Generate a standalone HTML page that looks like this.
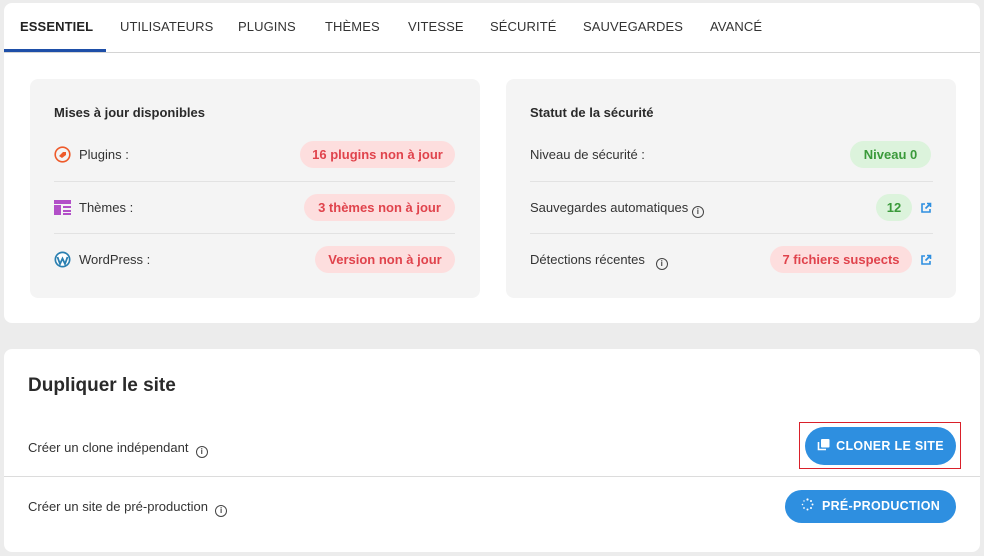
<!DOCTYPE html>
<html><head><meta charset="utf-8"><style>
*{box-sizing:border-box;margin:0;padding:0}
body{width:984px;height:556px;background:#ececec;font-family:"Liberation Sans",sans-serif;color:#333;position:relative;overflow:hidden}
.a{position:absolute}
.card{background:#fff;border-radius:8px}
.tab{position:absolute;top:19px;font-size:13px;color:#333;letter-spacing:.1px}
.panel{background:#f4f4f4;border-radius:8px}
.ttl{font-size:13px;font-weight:bold;color:#2a2a2a}
.lbl{font-size:13px;color:#333}
.b{position:absolute;height:27px;border-radius:14px;font-size:13px;font-weight:bold;line-height:27px;text-align:center}
.r{background:#fddede;color:#e0434c}
.g{background:#dcf3dc;color:#3a9a3a}
.hr{position:absolute;height:1px;background:#e2e2e2}
.info{display:inline-block;width:12px;height:12px;border:1.3px solid #444;border-radius:50%;font-size:8px;line-height:10px;text-align:center;font-weight:bold;vertical-align:-2px;color:#444}
.btn{position:absolute;background:#2e8fe0;color:#fff;font-weight:bold;font-size:12.5px;border-radius:19px;text-align:center;letter-spacing:.3px}
</style></head><body>
<div class="a card" style="left:4px;top:3px;width:976px;height:320px"></div>
<div class="tab" style="left:20px;font-weight:bold;color:#222">ESSENTIEL</div>
<div class="tab" style="left:120px">UTILISATEURS</div>
<div class="tab" style="left:238px">PLUGINS</div>
<div class="tab" style="left:325px">THÈMES</div>
<div class="tab" style="left:408px">VITESSE</div>
<div class="tab" style="left:490px">SÉCURITÉ</div>
<div class="tab" style="left:583px">SAUVEGARDES</div>
<div class="tab" style="left:710px">AVANCÉ</div>
<div class="a" style="left:4px;top:52px;width:976px;height:1px;background:#d4d4d4"></div>
<div class="a" style="left:4px;top:49px;width:102px;height:3px;background:#1e4fa8"></div>

<div class="a panel" style="left:30px;top:79px;width:450px;height:219px"></div>
<div class="a ttl" style="left:54px;top:105px">Mises à jour disponibles</div>
<svg class="a" style="left:54px;top:146px" width="17" height="17" viewBox="0 0 17 17"><circle cx="8.5" cy="8.5" r="7.3" fill="none" stroke="#ee5a2a" stroke-width="1.6"/><path d="M5 10 L9 6 L12 6 L12 9 L8 12Z" fill="#ee5a2a"/></svg>
<div class="a lbl" style="left:79px;top:147px">Plugins :</div>
<div class="b r" style="left:300px;top:141px;width:155px">16 plugins non à jour</div>
<div class="hr" style="left:54px;top:181px;width:401px"></div>
<svg class="a" style="left:54px;top:200px" width="17" height="15" viewBox="0 0 17 15"><rect x="0" y="0" width="17" height="4" fill="#b24fc8"/><rect x="0" y="5" width="7" height="10" fill="#b24fc8"/><rect x="9" y="6" width="8" height="2" fill="#b24fc8"/><rect x="9" y="10" width="8" height="2" fill="#b24fc8"/><rect x="9" y="13" width="8" height="2" fill="#b24fc8"/></svg>
<div class="a lbl" style="left:79px;top:200px">Thèmes :</div>
<div class="b r" style="left:304px;top:194px;width:151px">3 thèmes non à jour</div>
<div class="hr" style="left:54px;top:233px;width:401px"></div>
<svg class="a" style="left:54px;top:251px" width="17" height="17" viewBox="0 0 17 17"><circle cx="8.5" cy="8.5" r="8" fill="#2a7fb0"/><circle cx="8.5" cy="8.5" r="6.3" fill="#fff"/><path d="M3.5 6 L6 13 L8.5 7.5 L11 13 L13.5 6" fill="none" stroke="#2a7fb0" stroke-width="1.8"/></svg>
<div class="a lbl" style="left:79px;top:252px">WordPress :</div>
<div class="b r" style="left:315px;top:246px;width:140px">Version non à jour</div>

<div class="a panel" style="left:506px;top:79px;width:450px;height:219px"></div>
<div class="a ttl" style="left:530px;top:105px">Statut de la sécurité</div>
<div class="a lbl" style="left:530px;top:147px">Niveau de sécurité :</div>
<div class="b g" style="left:850px;top:141px;width:81px">Niveau 0</div>
<div class="hr" style="left:530px;top:181px;width:403px"></div>
<div class="a lbl" style="left:530px;top:200px">Sauvegardes automatiques <span class="info">i</span></div>
<div class="b g" style="left:876px;top:194px;width:36px">12</div>
<svg class="a" style="left:920px;top:202px" width="12" height="12" viewBox="0 0 12 12"><path d="M5 2H2v8h8V7M7 1.5h3.5V5M10.5 1.5L5.5 6.5" fill="none" stroke="#2e8fe0" stroke-width="1.6"/></svg>
<div class="hr" style="left:530px;top:233px;width:403px"></div>
<div class="a lbl" style="left:530px;top:252px">Détections récentes &nbsp;&nbsp;<span class="info">i</span></div>
<div class="b r" style="left:770px;top:246px;width:142px">7 fichiers suspects</div>
<svg class="a" style="left:920px;top:254px" width="12" height="12" viewBox="0 0 12 12"><path d="M5 2H2v8h8V7M7 1.5h3.5V5M10.5 1.5L5.5 6.5" fill="none" stroke="#2e8fe0" stroke-width="1.6"/></svg>

<div class="a card" style="left:4px;top:349px;width:976px;height:203px"></div>
<div class="a" style="left:28px;top:375px;font-size:19px;font-weight:bold;color:#2a2a2a">Dupliquer le site</div>
<div class="a lbl" style="left:28px;top:440px">Créer un clone indépendant &nbsp;<span class="info">i</span></div>
<div class="a" style="left:4px;top:476px;width:976px;height:1px;background:#dcdcdc"></div>
<div class="a lbl" style="left:28px;top:499px">Créer un site de pré-production &nbsp;<span class="info">i</span></div>
<div class="a" style="left:799px;top:422px;width:162px;height:47px;border:1.5px solid #d9202a"></div>
<div class="btn" style="left:805px;top:427px;width:151px;height:38px;line-height:38px"><svg width="13" height="13" viewBox="0 0 13 13" style="vertical-align:-1px;margin-right:6px"><rect x="4" y="1" width="8.5" height="8.5" rx="1" fill="#fff"/><path d="M1.5 4v7.5H9" fill="none" stroke="#fff" stroke-width="1.6"/></svg>CLONER LE SITE</div>
<div class="btn" style="left:785px;top:490px;width:171px;height:33px;line-height:33px"><svg width="13" height="13" viewBox="0 0 13 13" style="vertical-align:-1px;margin-right:8px" fill="#fff"><circle cx="6.5" cy="1.5" r="1.1"/><circle cx="10" cy="3" r="1"/><circle cx="11.5" cy="6.5" r="1"/><circle cx="10" cy="10" r="1"/><circle cx="6.5" cy="11.5" r="1"/><circle cx="3" cy="10" r=".9"/><circle cx="1.5" cy="6.5" r=".8"/><circle cx="3" cy="3" r=".7"/></svg>PRÉ-PRODUCTION</div>
</body></html>
